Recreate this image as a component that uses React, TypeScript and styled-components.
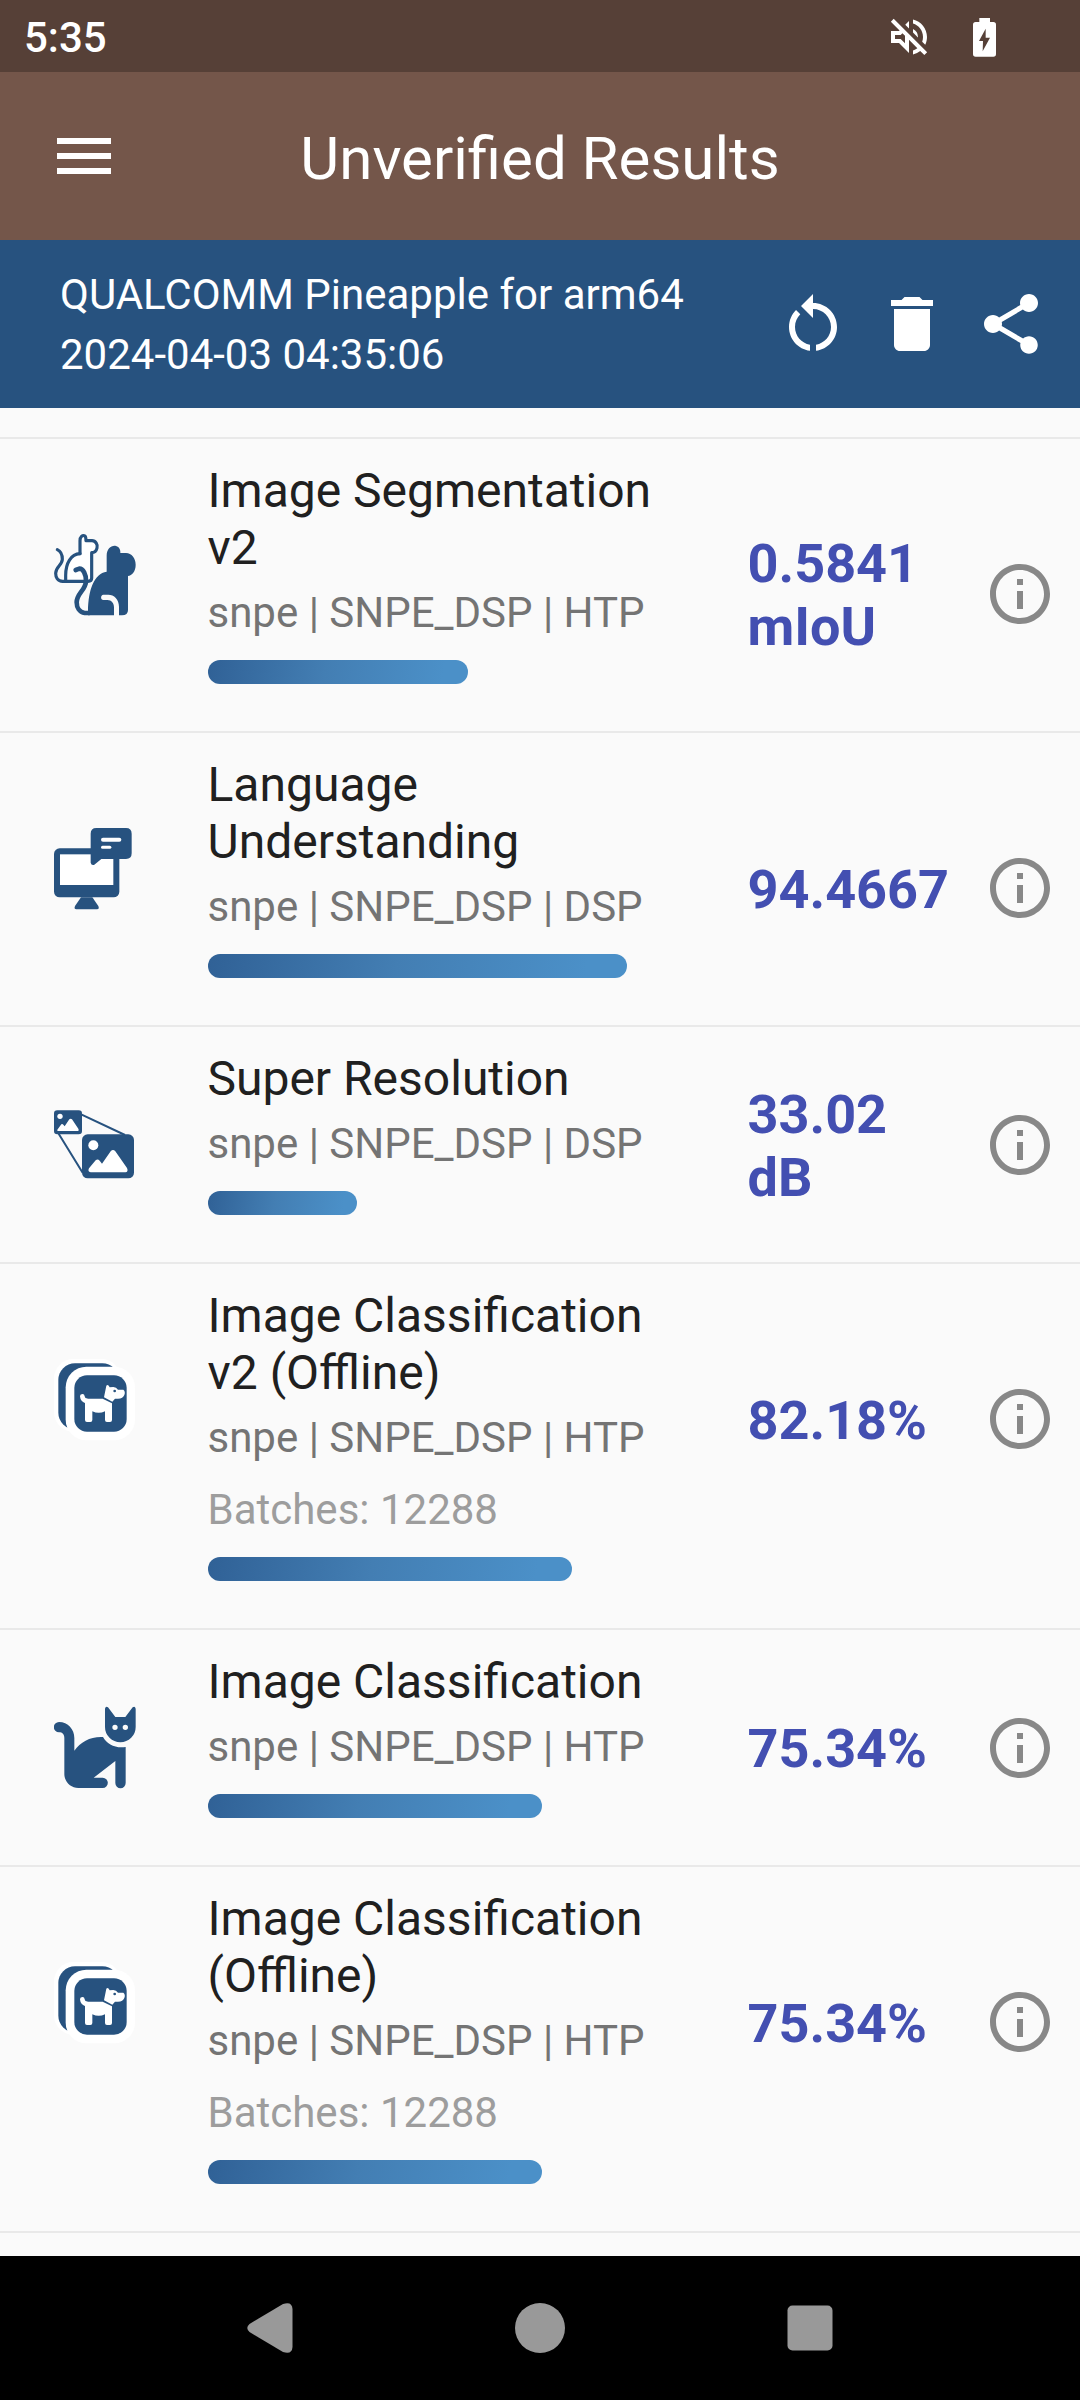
import React from "react";
import styled, { createGlobalStyle } from "styled-components";

const NAVY = "#27527f";

const GlobalStyle = createGlobalStyle`
  * { box-sizing: border-box; }
  body { margin: 0; background: #fafafa; font-family: Roboto, "Noto Sans", sans-serif; }
  svg { display: block; flex: none; }
`;

const Screen = styled.div`
  width: 1080px;
  height: 2400px;
  display: flex;
  flex-direction: column;
  overflow: hidden;
  background: #fafafa;
`;

const StatusBar = styled.div`
  flex: none;
  height: 72px;
  padding: 2px 84px 0 24px;
  display: flex;
  align-items: center;
  background: #564037;
  color: #fff;
`;

const Clock = styled.span`
  flex: 1;
  padding-top: 2px;
  font-size: 42px;
  font-weight: 500;
  line-height: 50px;
`;

const StatusIcons = styled.div`
  display: flex;
  align-items: center;
  gap: 40px;
`;

const AppBar = styled.header`
  flex: none;
  height: 168px;
  padding: 0 48px;
  display: grid;
  grid-template-columns: 72px 1fr 72px;
  align-items: center;
  background: #74564a;
  color: #fff;
`;

const AppTitle = styled.h1`
  margin: 6px 0 0;
  text-align: center;
  font-size: 60px;
  font-weight: 400;
  line-height: 70px;
`;

const DeviceBar = styled.section`
  flex: none;
  height: 168px;
  padding: 0 33px 0 60px;
  display: flex;
  align-items: center;
  gap: 27px;
  background: ${NAVY};
  color: #fff;
`;

const DeviceText = styled.div`
  flex: 1;
  padding-top: 2px;
  font-size: 42px;
  line-height: 60px;
`;

const Results = styled.main`
  flex: 1;
  min-height: 0;
  padding-top: 29px;
  overflow: hidden;
`;

const Row = styled.article`
  display: flex;
  align-items: flex-start;
  padding: 23px 24px 47px 54px;
  border-top: 2px solid #e9e9e9;
`;

const Leading = styled.div<{ $tall: boolean }>`
  margin: ${(p) => (p.$tall ? 71 : 53)}px 69.5px -20px 0;
`;

const Details = styled.div`
  width: 460px;
  margin-right: 80px;
`;

const Name = styled.div`
  font-size: 48px;
  line-height: 57px;
  color: #202020;
`;

const Backend = styled.div`
  margin-top: 12px;
  font-size: 42px;
  line-height: 50px;
  white-space: nowrap;
  color: #747474;
`;

const Batches = styled.div`
  margin-top: 22px;
  font-size: 42px;
  line-height: 50px;
  color: #9d9d9d;
`;

const Track = styled.div`
  width: 444px;
  height: 24px;
  margin-top: 22px;
`;

const Bar = styled.div`
  height: 24px;
  border-radius: 12px;
  background: linear-gradient(100deg, #306196 0%, #437eb3 45%, #4b90c8 90%);
`;

const Score = styled.div<{ $tall: boolean }>`
  flex: 1;
  height: ${(p) => (p.$tall ? 264 : 189)}px;
  margin-bottom: -60px;
  display: flex;
  align-items: center;
`;

const Value = styled.div`
  width: 213px;
  padding-top: 2px;
  font-size: 54px;
  font-weight: 700;
  line-height: 63px;
  color: #434fb1;
`;

const InfoIcon = styled.svg`
  margin-left: auto;
`;

const ListEnd = styled.div`
  border-top: 2px solid #e9e9e9;
`;

const NavBar = styled.nav`
  flex: none;
  height: 144px;
  padding: 0 135px;
  display: grid;
  grid-template-columns: repeat(3, 1fr);
  place-items: center;
  background: #000;
`;

function MaterialIcon({ d, size = 72 }: { d: string; size?: number }) {
  return (
    <svg width={size} height={size} viewBox="0 0 24 24" fill="#fff">
      <path d={d} />
    </svg>
  );
}

const MENU = "M3 18h18v-2H3v2zm0-5h18v-2H3v2zm0-7v2h18V6H3z";
const RESTART =
  "M12 5V2L8 6l4 4V7c3.31 0 6 2.69 6 6 0 2.97-2.17 5.43-5 5.91v2.02c3.95-.49 7-3.85 7-7.93 0-4.42-3.58-8-8-8zm-6 8c0-1.65.67-3.15 1.76-4.24L6.34 7.34C4.9 8.79 4 10.79 4 13c0 4.08 3.05 7.44 7 7.93v-2.02c-2.83-.48-5-2.94-5-5.91z";
const DELETE = "M6 19c0 1.1.9 2 2 2h8c1.1 0 2-.9 2-2V7H6v12zM19 4h-3.5l-1-1h-5l-1 1H5v2h14V4z";
const SHARE =
  "M18 16.08c-.76 0-1.44.3-1.96.77L8.91 12.7c.05-.23.09-.46.09-.7s-.04-.47-.09-.7l7.05-4.11c.54.5 1.25.81 2.04.81 1.66 0 3-1.34 3-3s-1.34-3-3-3-3 1.34-3 3c0 .24.04.47.09.7L8.04 9.81C7.5 9.31 6.79 9 6 9c-1.66 0-3 1.34-3 3s1.34 3 3 3c.79 0 1.5-.31 2.04-.81l7.12 4.16c-.05.21-.08.43-.08.65 0 1.61 1.31 2.92 2.92 2.92s2.92-1.31 2.92-2.92-1.31-2.92-2.92-2.92z";
const MUTED =
  "M4.34 2.93L2.93 4.34 7.29 8.7 7 9H3v6h4l5 5v-6.59l4.18 4.18c-.65.49-1.38.88-2.18 1.11v2.06a8.94 8.94 0 0 0 3.61-1.75l2.05 2.05 1.41-1.41L4.34 2.93zM10 15.17L7.83 13H5v-2h2.83l.88-.88L10 11.41v3.76zM19 12c0 .82-.15 1.61-.41 2.34l1.53 1.53c.56-1.17.88-2.48.88-3.87 0-4.28-2.99-7.86-7-8.77v2.06c2.89.86 5 3.54 5 6.71zm-7-8l-1.88 1.88L12 7.76V4zm4.5 8A4.5 4.5 0 0 0 14 7.97v1.79l2.48 2.48c.01-.08.02-.16.02-.24z";
const INFO =
  "M11 7h2v2h-2zm0 4h2v6h-2zm1-9C6.48 2 2 6.48 2 12s4.48 10 10 10 10-4.48 10-10S17.52 2 12 2zm0 18c-4.41 0-8-3.59-8-8s3.59-8 8-8 8 3.59 8 8-3.59 8-8 8z";

function BatteryIcon() {
  return (
    <svg width="23" height="39" viewBox="0 0 69 117" fill="#fff">
      <path
        fillRule="evenodd"
        d="M19 0h32v12h10q8 0 8 8v88q0 8-8 8H8q-8 0-8-8V20q0-8 8-8h11zM38 32L18 69h12l-1 31L51 59H38z"
      />
    </svg>
  );
}

function SegmentationIcon() {
  return (
    <svg width="84" height="84" viewBox="72 69 252 252" fill="none" stroke={NAVY} strokeLinecap="round" strokeLinejoin="round">
      <path
        fill="#fff"
        stroke="none"
        d="M107 212V190C108 158 125 134 150 132V92C150 75 167 75 167 92H185C207 95 205 126 184 129V212Z"
      />
      <g strokeWidth="9.5">
        <path d="M150 131V92C150 80 158 75 163 77C169 79 167 86 168 92H186C197 92 204 104 201 114C199 123 192 128 185 128V204Q185 214 174 214H98C82 214 77 200 77 190C77 170 97 165 97 148C97 135 93 124 82 119" />
        <path d="M107 212V196C107 160 123 132 150 131" />
      </g>
      <path d="M178 309H164C148 307 140 292 140 277C140 250 168 240 168 212C168 193 160 176 148 176L137 180" strokeWidth="14" />
      <path
        fill={NAVY}
        stroke="none"
        d="M174 316V303C175 240 192 190 230 185V138C230 115 245 105 258 108C268 111 272 120 271 129H288C305 129 317 145 317 164C317 184 306 197 294 198V300Q294 316 276 316H267V290C267 268 252 254 235 254H220C211 255 211 270 220 270H232C245 270 252 280 252 292V316Z"
      />
    </svg>
  );
}

function LanguageIcon() {
  return (
    <svg width="84" height="84" viewBox="72 66 252 252" fill={NAVY}>
      <rect x="72" y="130" width="196" height="147" rx="17" />
      <rect x="90" y="148" width="160" height="92" fill="#fff" />
      <path d="M153 277H187L205 303Q209 313 201 313H139Q131 313 135 303Z" />
      <path d="M199 69H288Q305 69 305 86V145Q305 162 288 162H214L193 179Q184 182 182 173V86Q182 69 199 69Z" />
      <rect x="213" y="98" width="61" height="12" rx="6" fill="#fff" />
      <rect x="213" y="122" width="31" height="9" rx="4.5" fill="#fff" />
    </svg>
  );
}

function SuperResolutionIcon() {
  return (
    <svg width="84" height="84" viewBox="72 54 252 252" fill={NAVY}>
      <path d="M155 89L285 150M86 146L158 263" stroke={NAVY} strokeWidth="6" fill="none" />
      <rect x="72" y="76" width="84" height="72" rx="10" />
      <rect x="156" y="148" width="156" height="132" rx="17" />
      <g fill="#fff">
        <circle cx="90" cy="94" r="8" />
        <path d="M82 134L94 118Q97 116 100 119L104 124L118 103Q122 99 126 103L145 131Q148 138 142 138H85Q80 138 82 134Z" />
        <circle cx="190" cy="181" r="15" />
        <path d="M177 250L197 226Q203 221 209 227L216 236L242 199Q249 191 256 199L291 249Q296 261 286 262H182Q172 260 177 250Z" />
      </g>
    </svg>
  );
}

function OfflineIcon() {
  return (
    <svg width="84" height="84" viewBox="72 69 252 252" fill="#fff">
      <rect x="72" y="72" width="200" height="218" rx="58" />
      <rect x="85" y="85" width="182" height="198" rx="50" fill={NAVY} />
      <rect x="107" y="95" width="208" height="221" rx="62" />
      <rect x="133" y="121" width="157" height="169" rx="38" fill={NAVY} />
      <path d="M157 184Q158 197 172 198" fill="none" stroke="#fff" strokeWidth="14" strokeLinecap="round" />
      <path d="M165 191H218L246 205V255Q246 261 240 261H231Q225 261 225 255V229Q206 238 187 229V255Q187 261 181 261H171Q165 261 165 255Z" />
      <path d="M222 187L229 152Q234 147 239 157L250 156Q259 156 264 164H280Q287 169 283 180Q279 191 264 191H255L247 200Z" />
      <circle cx="254" cy="168" r="4" fill={NAVY} />
    </svg>
  );
}

function ClassificationIcon() {
  return (
    <svg width="84" height="84" viewBox="72 78 252 252" fill={NAVY}>
      <path d="M87 126C114 126 133 148 133 174V212C152 185 182 169 219 171C231 192 256 206 287 201V309A15.500 15.500 0 0 1 256 309V243L191 293H218A15.500 15.500 0 0 1 218 324H145C122 324 103 305 103 282V174C103 163 97 157 87 157A15.500 15.500 0 0 1 87 126Z" />
      <path
        fillRule="evenodd"
        d="M225 86Q227 77 234 82L256 111H286L308 82Q315 77 317 86V141A46 46 0 0 1 225 141ZM247 142a8 8 0 1 0 16 0a8 8 0 1 0-16 0M278 142a8 8 0 1 0 16 0a8 8 0 1 0-16 0"
      />
    </svg>
  );
}

type Result = {
  name: string;
  backend: string;
  value: string;
  percent: number;
  icon: React.ComponentType;
  tall: boolean;
  batches?: number;
};

const results: Result[] = [
  { name: "Image Segmentation v2", backend: "snpe | SNPE_DSP | HTP", value: "0.5841 mIoU", percent: 58.6, icon: SegmentationIcon, tall: true },
  { name: "Language Understanding", backend: "snpe | SNPE_DSP | DSP", value: "94.4667", percent: 94.4667, icon: LanguageIcon, tall: true },
  { name: "Super Resolution", backend: "snpe | SNPE_DSP | DSP", value: "33.02 dB", percent: 33.7, icon: SuperResolutionIcon, tall: false },
  { name: "Image Classification v2 (Offline)", backend: "snpe | SNPE_DSP | HTP", value: "82.18%", percent: 82.18, icon: OfflineIcon, tall: true, batches: 12288 },
  { name: "Image Classification", backend: "snpe | SNPE_DSP | HTP", value: "75.34%", percent: 75.34, icon: ClassificationIcon, tall: false },
  { name: "Image Classification (Offline)", backend: "snpe | SNPE_DSP | HTP", value: "75.34%", percent: 75.34, icon: OfflineIcon, tall: true, batches: 12288 },
];

function ResultRow({ result }: { result: Result }) {
  const Icon = result.icon;
  return (
    <Row>
      <Leading $tall={result.tall}>
        <Icon />
      </Leading>
      <Details>
        <Name>{result.name}</Name>
        <Backend>{result.backend}</Backend>
        {result.batches && <Batches>Batches: {result.batches}</Batches>}
        <Track>
          <Bar style={{ width: `${result.percent}%` }} />
        </Track>
      </Details>
      <Score $tall={result.tall}>
        <Value>{result.value}</Value>
        <InfoIcon width="72" height="72" viewBox="0 0 24 24" fill="#888">
          <path d={INFO} />
        </InfoIcon>
      </Score>
    </Row>
  );
}

export default function App() {
  return (
    <Screen>
      <GlobalStyle />
      <StatusBar>
        <Clock>5:35</Clock>
        <StatusIcons>
          <MaterialIcon d={MUTED} size={48} />
          <BatteryIcon />
        </StatusIcons>
      </StatusBar>
      <AppBar>
        <MaterialIcon d={MENU} />
        <AppTitle>Unverified Results</AppTitle>
      </AppBar>
      <DeviceBar>
        <DeviceText>
          <div>QUALCOMM Pineapple for arm64</div>
          <div>2024-04-03 04:35:06</div>
        </DeviceText>
        <MaterialIcon d={RESTART} />
        <MaterialIcon d={DELETE} />
        <MaterialIcon d={SHARE} />
      </DeviceBar>
      <Results>
        {results.map((result) => (
          <ResultRow key={result.name} result={result} />
        ))}
        <ListEnd />
      </Results>
      <NavBar>
        <svg width="46" height="52" viewBox="0 0 46 52" fill="#999">
          <path d="M2.500 22L36 2Q45 -1 45.500 7V45Q45 53 36 50L2.500 30Q-2 26 2.500 22Z" />
        </svg>
        <svg width="50" height="50" viewBox="0 0 50 50" fill="#999">
          <circle cx="25" cy="25" r="25" />
        </svg>
        <svg width="46" height="46" viewBox="0 0 46 46" fill="#999">
          <rect x="0.500" y="0.500" width="45" height="45" rx="5" />
        </svg>
      </NavBar>
    </Screen>
  );
}
